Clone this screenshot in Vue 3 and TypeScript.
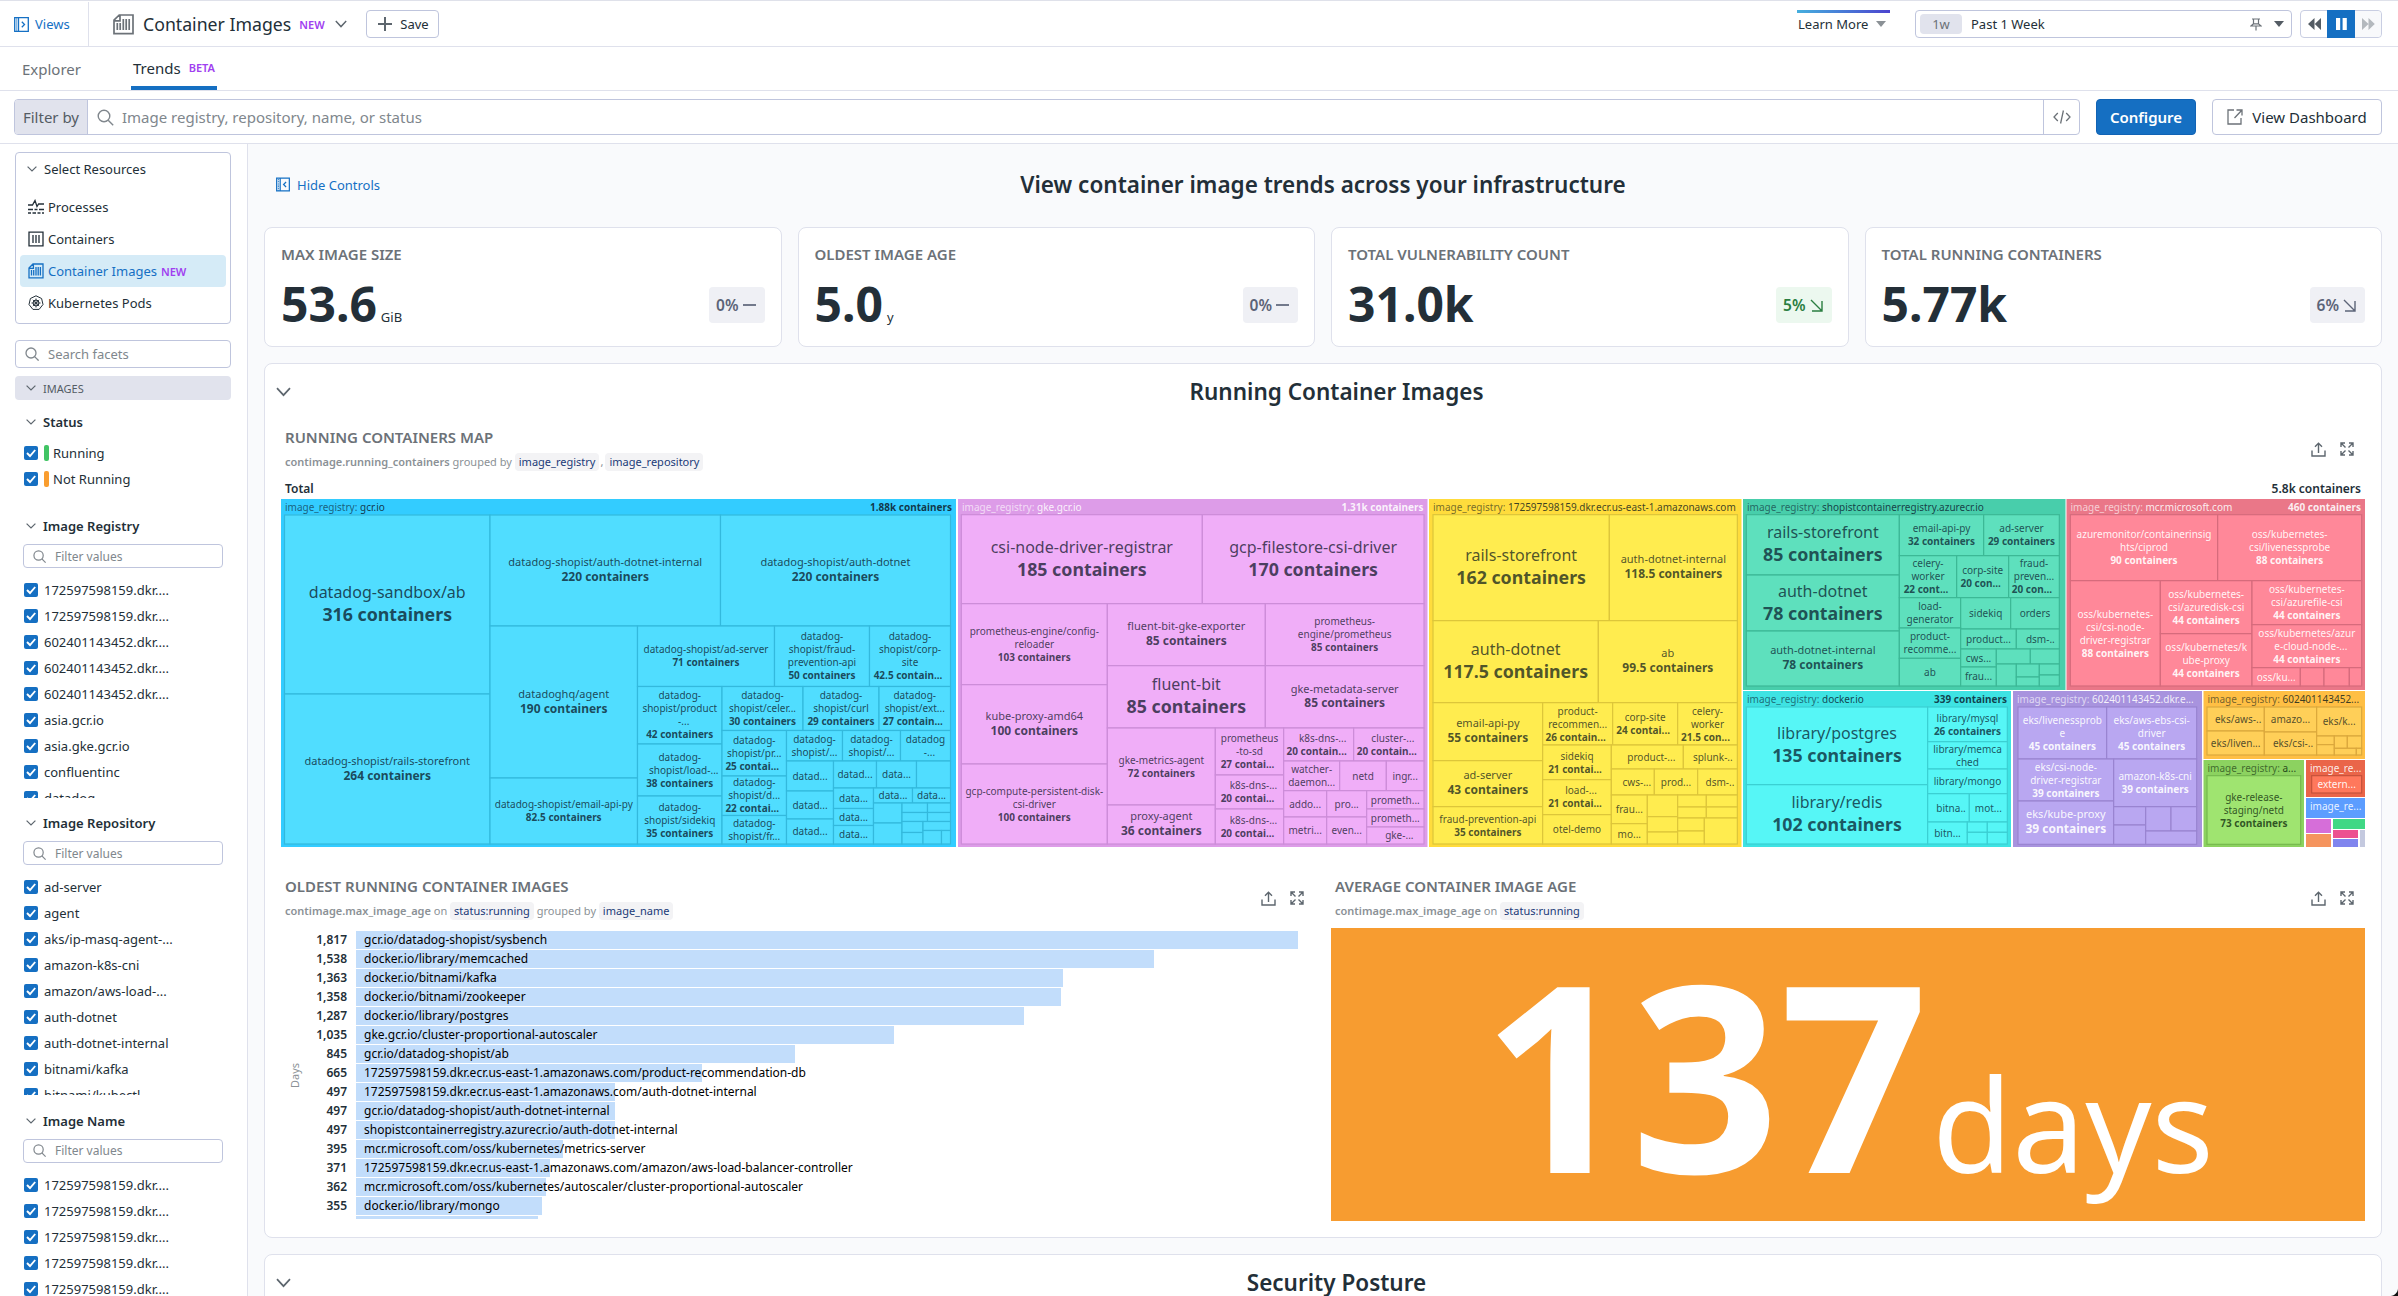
<script setup lang="ts">
interface Group {
  name: string
  total?: string
  box: number[]
  origin: [number, number]
  unit: number
  fill: string
  inner: string
  line: string
  ink: string
  headInk?: string
  tiles: Tile[]
}
// [left, top, right, bottom, size (s | m | l), name lines, count]
type Tile = [number, number, number, number, string?, string?, string?]
interface Line { text: string; x: number; y: number; size: number; bold: boolean }

const dark = '#0d2330'
const groups: Group[] = [
  {
    name: 'gcr.io', total: '1.88k containers', box: [281, 499, 956, 847], origin: [0, 0], unit: 1,
    fill: '#33ccff', inner: '#50ddff', line: '#33b9dd', ink: dark,
    tiles: [
      [284.5, 515, 490, 694, 'l', 'datadog-sandbox/ab', '316 containers'],
      [284.5, 694, 490, 844, 'm', 'datadog-shopist/rails-storefront', '264 containers'],
      [490, 515, 720.5, 626, 'm', 'datadog-shopist/auth-dotnet-internal', '220 containers'],
      [720.5, 515, 950.5, 626, 'm', 'datadog-shopist/auth-dotnet', '220 containers'],
      [490, 626, 637.5, 778, 'm', 'datadoghq/agent', '190 containers'],
      [490, 778, 637.5, 844, 's', 'datadog-shopist/email-api-py', '82.5 containers'],
      [637.5, 626, 774.5, 686.5, 's', 'datadog-shopist/ad-server', '71 containers'],
      [774.5, 626, 869.5, 686.5, 's', 'datadog-|shopist/fraud-|prevention-api', '50 containers'],
      [869.5, 626, 950.5, 686.5, 's', 'datadog-|shopist/corp-|site', '42.5 contain...'],
      [637.5, 686.5, 722, 744, 's', 'datadog-|shopist/product|-...', '42 containers'],
      [722, 686.5, 803, 730.5, 's', 'datadog-|shopist/celer...', '30 containers'],
      [803, 686.5, 879, 730.5, 's', 'datadog-|shopist/curl', '29 containers'],
      [879, 686.5, 950.5, 730.5, 's', 'datadog-|shopist/ext...', '27 contain...'],
      [637.5, 744, 722, 796, 's', 'datadog-|shopist/load-...', '38 containers'],
      [637.5, 796, 722, 844, 's', 'datadog-|shopist/sidekiq', '35 containers'],
      [722, 730.5, 786.5, 776, 's', 'datadog-|shopist/pr...', '25 contai...'],
      [786.5, 730.5, 842.5, 761, 's', 'datadog-|shopist/...'],
      [842.5, 730.5, 900.5, 761, 's', 'datadog-|shopist/...'],
      [900.5, 730.5, 950.5, 761, 's', 'datadog|-...'],
      [722, 776, 786.5, 815.5, 's', 'datadog-|shopist/d...', '22 contai...'],
      [722, 815.5, 786.5, 844, 's', 'datadog-|shopist/fr...'],
      [786.5, 761, 833.5, 791, 's', 'datad...'],
      [786.5, 791, 833.5, 819, 's', 'datad...'],
      [786.5, 819, 833.5, 844, 's', 'datad...'],
      [833.5, 761, 876.5, 788, 's', 'datad...'],
      [876.5, 761, 916.5, 788, 's', 'data...'],
      [916.5, 761, 950.5, 788],
      [833.5, 788, 873.5, 808.5, 's', 'data...'],
      [833.5, 808.5, 873.5, 825.5, 's', 'data...'],
      [833.5, 825.5, 873.5, 844, 's', 'data...'],
      [873.5, 788, 912.5, 803, 's', 'data...'],
      [912.5, 788, 950.5, 803, 's', 'data...'],
      [873.5, 803, 902, 823], [873.5, 823, 902, 844],
      [902, 803, 927.5, 812.5], [927.5, 803, 950.5, 812.5],
      [902, 812.5, 927.5, 821.5], [927.5, 812.5, 950.5, 821.5],
      [902, 821.5, 923, 832.5], [902, 832.5, 923, 844],
      [923, 821.5, 950.5, 830.5], [923, 830.5, 941.5, 844], [941.5, 830.5, 950.5, 844],
    ],
  },
  {
    name: 'gke.gcr.io', total: '1.31k containers', box: [958, 499, 1427.5, 847], origin: [940, 480], unit: 3,
    fill: '#dd9ce8', inner: '#f0aef8', line: '#cc8cd8', ink: '#1d2136', headInk: '#ffffff',
    tiles: [
      [64, 104, 787, 371, 'l', 'csi-node-driver-registrar', '185 containers'],
      [787, 104, 1452, 371, 'l', 'gcp-filestore-csi-driver', '170 containers'],
      [64, 371, 502, 614, 's', 'prometheus-engine/config-|reloader', '103 containers'],
      [64, 614, 502, 852, 'm', 'kube-proxy-amd64', '100 containers'],
      [64, 852, 502, 1092, 's', 'gcp-compute-persistent-disk-|csi-driver', '100 containers'],
      [502, 371, 976, 557, 'm', 'fluent-bit-gke-exporter', '85 containers'],
      [976, 371, 1452, 557, 's', 'prometheus-|engine/prometheus', '85 containers'],
      [502, 557, 976, 744, 'l', 'fluent-bit', '85 containers'],
      [976, 557, 1452, 744, 'm', 'gke-metadata-server', '85 containers'],
      [502, 744, 826, 975, 's', 'gke-metrics-agent', '72 containers'],
      [502, 975, 826, 1092, 'm', 'proxy-agent', '36 containers'],
      [826, 744, 1031, 885, 's', 'prometheus|-to-sd', '27 contai...'],
      [826, 885, 1031, 987, 's', 'k8s-dns-...', '20 contai...'],
      [826, 987, 1031, 1092, 's', 'k8s-dns-...', '20 contai...'],
      [1031, 744, 1241, 843, 's', 'k8s-dns-...', '20 contain...'],
      [1241, 744, 1452, 843, 's', 'cluster-...', '20 contain...'],
      [1031, 843, 1199, 932, 's', 'watcher-|daemon...'],
      [1199, 843, 1339, 932, 's', 'netd'],
      [1339, 843, 1452, 932, 's', 'ingr...'],
      [1031, 932, 1160, 1011, 's', 'addo...'],
      [1160, 932, 1280, 1011, 's', 'pro...'],
      [1031, 1011, 1160, 1092, 's', 'metri...'],
      [1160, 1011, 1280, 1092, 's', 'even...'],
      [1280, 932, 1452, 987, 's', 'prometh...'],
      [1280, 987, 1452, 1041, 's', 'prometh...'],
      [1280, 1041, 1452, 1092, 's', 'gke-...'],
    ],
  },
  {
    name: '172597598159.dkr.ecr.us-east-1.amazonaws.com', box: [1429, 499, 1741.5, 847], origin: [1410, 480], unit: 3,
    fill: '#ffdc3c', inner: '#ffec4f', line: '#dcc53a', ink: '#1f2c1f',
    tiles: [
      [69, 104, 598, 422, 'l', 'rails-storefront', '162 containers'],
      [598, 104, 982, 422, 'm', 'auth-dotnet-internal', '118.5 containers'],
      [69, 422, 565, 668, 'l', 'auth-dotnet', '117.5 containers'],
      [565, 422, 982, 668, 'm', 'ab', '99.5 containers'],
      [69, 668, 398, 842, 'm', 'email-api-py', '55 containers'],
      [69, 842, 398, 980, 'm', 'ad-server', '43 containers'],
      [69, 980, 398, 1092, 's', 'fraud-prevention-api', '35 containers'],
      [398, 668, 608, 795, 's', 'product-|recommen...', '26 contain...'],
      [608, 668, 803, 795, 's', 'corp-site', '24 contai...'],
      [803, 668, 982, 795, 's', 'celery-|worker', '21.5 con...'],
      [398, 795, 604, 899, 's', 'sidekiq', '21 contai...'],
      [398, 899, 604, 1004, 's', 'load-...', '21 contai...'],
      [398, 1004, 604, 1092, 's', 'otel-demo'],
      [604, 795, 820, 867, 's', 'product-...'],
      [820, 795, 982, 867, 's', 'splunk-..'],
      [604, 867, 733, 945, 's', 'cws-...'],
      [733, 867, 863, 945, 's', 'prod...'],
      [863, 867, 982, 945, 's', 'dsm-..'],
      [604, 945, 712, 1031, 's', 'frau...'],
      [604, 1031, 712, 1092, 's', 'mo...'],
      [712, 945, 803, 1010], [712, 1010, 803, 1056], [712, 1056, 803, 1092],
      [803, 945, 889, 981], [803, 981, 889, 1014], [889, 945, 982, 981], [889, 981, 982, 1014],
      [803, 1014, 883, 1053], [803, 1053, 883, 1092], [883, 1014, 982, 1092],
    ],
  },
  {
    name: 'shopistcontainerregistry.azurecr.io', box: [1743, 499, 2065.5, 690], origin: [1730, 480], unit: 3,
    fill: '#48ceab', inner: '#5ee0bd', line: '#3cb896', ink: '#0f2c38',
    tiles: [
      [49, 104, 508, 285, 'l', 'rails-storefront', '85 containers'],
      [49, 285, 508, 453, 'l', 'auth-dotnet', '78 containers'],
      [49, 453, 508, 618, 'm', 'auth-dotnet-internal', '78 containers'],
      [508, 104, 761, 227, 's', 'email-api-py', '32 containers'],
      [761, 104, 988, 227, 's', 'ad-server', '29 containers'],
      [508, 227, 680, 353, 's', 'celery-|worker', '22 cont...'],
      [680, 227, 836, 353, 's', 'corp-site', '20 con...'],
      [836, 227, 988, 353, 's', 'fraud-|preven...', '20 con...'],
      [508, 353, 692, 444, 's', 'load-|generator'],
      [692, 353, 842, 447, 's', 'sidekiq'],
      [842, 353, 988, 447, 's', 'orders'],
      [508, 444, 692, 535, 's', 'product-|recomme...'],
      [508, 535, 692, 618, 's', 'ab'],
      [692, 447, 859, 507, 's', 'product...'],
      [859, 447, 988, 507, 's', 'dsm-..'],
      [692, 507, 799, 561, 's', 'cws...'],
      [692, 561, 799, 618, 's', 'frau...'],
      [799, 507, 901, 552], [901, 507, 988, 552], [799, 552, 859, 618],
      [859, 552, 928, 591], [859, 591, 928, 618], [928, 552, 988, 585], [928, 585, 988, 618],
    ],
  },
  {
    name: 'docker.io', total: '339 containers', box: [1743, 691, 2011, 847], origin: [1730, 480], unit: 3,
    fill: '#3ee3e3', inner: '#56f6f6', line: '#3bcfd3', ink: '#0b2c3a',
    tiles: [
      [49, 681, 593, 914, 'l', 'library/postgres', '135 containers'],
      [49, 914, 593, 1092, 'l', 'library/redis', '102 containers'],
      [593, 681, 832, 785, 's', 'library/mysql', '26 containers'],
      [593, 785, 832, 867, 's', 'library/memca|ched'],
      [593, 867, 832, 941, 's', 'library/mongo'],
      [593, 941, 718, 1026, 's', 'bitna..'],
      [718, 941, 832, 1026, 's', 'mot...'],
      [593, 1026, 712, 1092, 's', 'bitn...'],
      [712, 1026, 772, 1057], [772, 1026, 832, 1057], [712, 1057, 772, 1092], [772, 1057, 832, 1092],
    ],
  },
  {
    name: 'mcr.microsoft.com', total: '460 containers', box: [2066.5, 499, 2365, 690], origin: [2040, 420], unit: 3,
    fill: '#ea7788', inner: '#ff8899', line: '#d56b7c', ink: '#ffffff',
    tiles: [
      [91, 284, 533, 482, 's', 'azuremonitor/containerinsig|hts/ciprod', '90 containers'],
      [533, 284, 965, 482, 's', 'oss/kubernetes-|csi/livenessprobe', '88 containers'],
      [91, 482, 361, 798, 's', 'oss/kubernetes-|csi/csi-node-|driver-registrar', '88 containers'],
      [361, 482, 636, 641, 's', 'oss/kubernetes-|csi/azuredisk-csi', '44 containers'],
      [361, 641, 636, 798, 's', 'oss/kubernetes/k|ube-proxy', '44 containers'],
      [636, 482, 965, 614, 's', 'oss/kubernetes-|csi/azurefile-csi', '44 containers'],
      [636, 614, 965, 743, 's', 'oss/kubernetes/azur|e-cloud-node-...', '44 containers'],
      [636, 743, 781, 798, 's', 'oss/ku...'],
      [781, 743, 852, 798], [852, 743, 928, 798], [928, 743, 965, 798],
    ],
  },
  {
    name: '602401143452.dkr.e...', box: [2013, 691, 2202, 847], origin: [2040, 420], unit: 3,
    fill: '#a893de', inner: '#b9a7f1', line: '#9984d0', ink: '#ffffff',
    tiles: [
      [-66, 861, 200, 1017, 's', 'eks/livenessprob|e', '45 containers'],
      [200, 861, 470, 1017, 's', 'eks/aws-ebs-csi-|driver', '45 containers'],
      [-66, 1017, 221, 1143, 's', 'eks/csi-node-|driver-registrar', '39 containers'],
      [-66, 1143, 221, 1273, 'm', 'eks/kube-proxy', '39 containers'],
      [221, 1017, 470, 1160, 's', 'amazon-k8s-cni', '39 containers'],
      [221, 1160, 317, 1215], [221, 1215, 317, 1273], [317, 1160, 393, 1233], [393, 1160, 470, 1233], [317, 1233, 470, 1273],
    ],
  },
  {
    name: '602401143452...', box: [2203.5, 691, 2365, 759], origin: [2040, 420], unit: 3,
    fill: '#ffbf44', inner: '#ffcf58', line: '#dba83c', ink: '#1f2c1f',
    tiles: [
      [501, 861, 673, 933, 's', 'eks/aws-..'],
      [501, 933, 673, 1005, 's', 'eks/liven...'],
      [673, 861, 830, 936, 's', 'amazo...'],
      [673, 936, 830, 1005, 's', 'eks/csi-..'],
      [830, 861, 965, 948, 's', 'eks/k...'],
      [830, 948, 883, 974], [830, 974, 883, 1005], [883, 948, 922, 985], [922, 948, 965, 985], [883, 985, 949, 1005], [949, 985, 965, 1005],
    ],
  },
  {
    name: 'a...', box: [2203.5, 760, 2304, 847], origin: [2040, 420], unit: 3,
    fill: '#8cd260', inner: '#9fe470', line: '#76b94e', ink: '#12300f',
    tiles: [[501, 1067, 782, 1273, 's', 'gke-release-|staging/netd', '73 containers']],
  },
  {
    name: '', box: [2306, 760, 2365, 797], origin: [2040, 420], unit: 3,
    fill: '#ea6549', inner: '#ff785c', line: '#c5523b', ink: '#ffffff',
    tiles: [[815, 1067, 965, 1119, 's', 'extern...']],
  },
  { name: '', box: [2306, 798, 2365, 818], origin: [0, 0], unit: 1, fill: '#5c9dff', inner: '', line: '', ink: '#ffffff', tiles: [] },
]

const specks: [number, number, number, number, string][] = [
  [2306, 819, 25, 14, '#d66ed9'],
  [2306, 834, 25, 13, '#f5945e'],
  [2333, 819, 32, 10, '#40d885'],
  [2333, 830, 25, 8, '#ec5190'],
  [2333, 839, 25, 8, '#8085ee'],
  [2360, 830, 5, 17, '#c4c9df'],
]

const place = (g: Group, v: number, axis: number) => g.origin[axis] + v / g.unit

function nudge(text: string, bold: boolean, size?: string): number {
  if (bold) return text.endsWith('...') ? -2 : 0
  if (size === 's' && text.endsWith('-...')) return 4
  if (text.endsWith('..') && !text.endsWith('...')) return 2.5
  return 0
}

function tileLines(g: Group, t: Tile): Line[] {
  const [x1, y1, x2, y2, size, label, count] = t
  if (!label) return []
  const cx = place(g, (x1 + x2) / 2, 0)
  const cy = place(g, (y1 + y2) / 2, 1)
  if (size === 'l') {
    return [
      { text: label, x: cx, y: cy - 6.4, size: 16, bold: false },
      { text: count ?? '', x: cx, y: cy + 16.6, size: 17.8, bold: true },
    ]
  }
  if (size === 'm') {
    return [
      { text: label, x: cx, y: cy - 4.3, size: 11, bold: false },
      { text: count ?? '', x: cx, y: cy + 10.6, size: 12, bold: true },
    ]
  }
  const texts = label.split('|').map((text) => ({ text, bold: false }))
  if (count) texts.push({ text: count, bold: true })
  return texts.map((l, i) => ({
    ...l,
    size: 10,
    x: cx + nudge(l.text, l.bold, size),
    y: cy + 3.7 + 13 * (i - (texts.length - 1) / 2),
  }))
}

const kpis = [
  { label: 'MAX IMAGE SIZE', value: '53.6', unit: 'GiB', delta: '0%', down: false, good: false },
  { label: 'OLDEST IMAGE AGE', value: '5.0', unit: 'y', delta: '0%', down: false, good: false },
  { label: 'TOTAL VULNERABILITY COUNT', value: '31.0k', unit: '', delta: '5%', down: true, good: true },
  { label: 'TOTAL RUNNING CONTAINERS', value: '5.77k', unit: '', delta: '6%', down: true, good: false },
]

const bars: [number, string][] = [
  [1817, 'gcr.io/datadog-shopist/sysbench'],
  [1538, 'docker.io/library/memcached'],
  [1363, 'docker.io/bitnami/kafka'],
  [1358, 'docker.io/bitnami/zookeeper'],
  [1287, 'docker.io/library/postgres'],
  [1035, 'gke.gcr.io/cluster-proportional-autoscaler'],
  [845, 'gcr.io/datadog-shopist/ab'],
  [665, '172597598159.dkr.ecr.us-east-1.amazonaws.com/product-recommendation-db'],
  [497, '172597598159.dkr.ecr.us-east-1.amazonaws.com/auth-dotnet-internal'],
  [497, 'gcr.io/datadog-shopist/auth-dotnet-internal'],
  [497, 'shopistcontainerregistry.azurecr.io/auth-dotnet-internal'],
  [395, 'mcr.microsoft.com/oss/kubernetes/metrics-server'],
  [371, '172597598159.dkr.ecr.us-east-1.amazonaws.com/amazon/aws-load-balancer-controller'],
  [362, 'mcr.microsoft.com/oss/kubernetes/autoscaler/cluster-proportional-autoscaler'],
  [355, 'docker.io/library/mongo'],
  [347, ''],
]
const barWidth = (days: number) => `${(2.4 + days * 0.5171).toFixed(1)}px`

const facets = [
  {
    title: 'Image Registry',
    values: ['172597598159.dkr....', '172597598159.dkr....', '602401143452.dkr....', '602401143452.dkr....', '602401143452.dkr....', 'asia.gcr.io', 'asia.gke.gcr.io', 'confluentinc', 'datadog'],
  },
  {
    title: 'Image Repository',
    values: ['ad-server', 'agent', 'aks/ip-masq-agent-...', 'amazon-k8s-cni', 'amazon/aws-load-...', 'auth-dotnet', 'auth-dotnet-internal', 'bitnami/kafka', 'bitnami/kubectl'],
  },
  {
    title: 'Image Name',
    values: ['172597598159.dkr....', '172597598159.dkr....', '172597598159.dkr....', '172597598159.dkr....', '172597598159.dkr....'],
  },
]
const statuses = [
  { name: 'Running', cls: 'ok' },
  { name: 'Not Running', cls: 'warn' },
]
</script>

<template>
  <div class="app">
    <header class="topbar">
      <a class="views">
        <svg width="15" height="15" viewBox="0 0 15 15" fill="none" stroke="currentColor" stroke-width="1.3"><path d="M.7.7h13.6v13.6H.7zM4.5.7v13.6" /><path d="M2.6 1.5v12.5" stroke-dasharray="1 1" /><path d="M7.8 4.8l2.7 2.7-2.7 2.7" /></svg>
        Views
      </a>
      <svg class="page-icon" width="21" height="21" viewBox="0 0 21 21" fill="none" stroke="#6c7278" stroke-width="1.7"><path d="M1 6.2L6.2 1H20v18.6H1zM7 1v5.8H1M10.3 5v11M13.2 5v11M16.2 5v11M7.2 9v7M4.3 9v7" /></svg>
      <span class="page-title">Container Images</span>
      <span class="tag title-tag">NEW</span>
      <svg class="title-chev" width="12" height="8" viewBox="0 0 12 8" fill="none" stroke="#5d666e" stroke-width="1.4"><path d="M.8 1L6 6.6 11.2 1" /></svg>
      <button class="save">
        <svg width="14" height="14" viewBox="0 0 14 14" fill="none" stroke="#5d666e" stroke-width="2"><path d="M7 0v14M0 7h14" /></svg>
        Save
      </button>
      <div class="grow"></div>
      <div class="learn"><span>Learn More</span><i class="caret"></i></div>
      <div class="range">
        <span class="range-pill">1w</span>
        <span class="range-text">Past 1 Week</span>
        <svg width="12" height="13" viewBox="0 0 12 13" fill="none" stroke="#6c7278" stroke-width="1.2"><path d="M2 1h8M3.5 1v5M8.5 1v5M3.5 5.8L1 8h10L8.5 5.8zM6 8v4.6" /></svg>
        <i class="caret dark"></i>
      </div>
      <div class="player">
        <span><svg width="13" height="12" viewBox="0 0 13 12" fill="#545c64"><path d="M6.5 0v12L0 6zM13 0v12L6.8 6z" /></svg></span>
        <span class="pause"><svg width="11" height="12" viewBox="0 0 11 12" fill="#fff"><path d="M0 0h4.2v12H0zM6.6 0h4.2v12H6.6z" /></svg></span>
        <span class="off"><svg width="13" height="12" viewBox="0 0 13 12" fill="#b4b9be"><path d="M0 0v12l6.5-6zM6.5 0v12L12.8 6z" /></svg></span>
      </div>
    </header>

    <nav class="tabs">
      <a class="tab">Explorer</a>
      <a class="tab active">Trends <span class="tag">BETA</span></a>
    </nav>

    <div class="filterbar">
      <div class="filter">
        <span class="filter-label">Filter by</span>
        <svg class="mag" width="17" height="17" viewBox="0 0 17 17" fill="none" stroke="#80878d" stroke-width="1.4"><circle cx="7" cy="7" r="5.8" /><path d="M11.2 11.2l5 5" /></svg>
        <span class="filter-hint">Image registry, repository, name, or status</span>
        <span class="code"><svg width="18" height="14" viewBox="0 0 18 14" fill="none" stroke="#6c7278" stroke-width="1.3"><path d="M4.8 3L1 7l3.8 4M13.2 3L17 7l-3.8 4M10.4.5l-2.8 13" /></svg></span>
      </div>
      <button class="configure">Configure</button>
      <button class="dash">
        <svg width="16" height="16" viewBox="0 0 16 16" fill="none" stroke="#6c7278" stroke-width="1.3"><path d="M7 1H1v14h13V9M9.5 1H15v5.5M15 1L7.5 9" /></svg>
        View Dashboard
      </button>
    </div>

    <div class="body">
      <aside class="side">
        <div class="resources">
          <div class="res-head"><svg class="chev" viewBox="0 0 10 6"><path d="M.6.6L5 5 9.4.6" /></svg>Select Resources</div>
          <div class="res">
            <svg width="16" height="16" viewBox="0 0 16 16" fill="none" stroke="#232f38" stroke-width="1.3"><path d="M0 6h4.5L7 1.5l2 6L10.6 5H16" /><path d="M0 10.5h5M6.5 10.5h3M11 10.5h5M0 14h3M4.5 14H8M9.5 14h3M14 14h2" stroke-width="1.7" /></svg>
            Processes
          </div>
          <div class="res">
            <svg width="16" height="16" viewBox="0 0 16 16" fill="none" stroke="#232f38" stroke-width="1.3"><path d="M1 1.2h14v13.6H1zM5 4v8M8 4v8M11 4v8" /></svg>
            Containers
          </div>
          <div class="res selected">
            <svg width="16" height="16" viewBox="0 0 16 16" fill="none" stroke="#1570c4" stroke-width="1.3"><path d="M1 5l4-4h10v13.8H1zM5.4 1v4.3H1M8 4v8.5M10.2 4v8.5M12.4 4v8.5M5.7 7v5.5M3.5 7v5.5" /></svg>
            Container Images <span class="tag">NEW</span>
          </div>
          <div class="res">
            <svg width="16" height="16" viewBox="0 0 16 16" fill="none" stroke="#232f38" stroke-width="1"><path d="M8 .8l5.6 2.7 1.4 6-3.9 4.9H4.9L1 9.5l1.4-6z" /><circle cx="8" cy="8" r="3" /><path d="M8 3.4v9.2M3.4 8h9.2M4.8 4.8l6.4 6.4M11.2 4.8l-6.4 6.4" stroke-width=".8" /></svg>
            Kubernetes Pods
          </div>
        </div>
        <div class="search">
          <svg width="14" height="14" viewBox="0 0 14 14" fill="none" stroke="#80878d" stroke-width="1.3"><circle cx="6" cy="6" r="5" /><path d="M9.6 9.6l4 4" /></svg>
          Search facets
        </div>
        <div class="images-bar"><svg class="chev" viewBox="0 0 10 6"><path d="M.6.6L5 5 9.4.6" /></svg>IMAGES</div>
        <section class="status">
          <h4><svg class="chev" viewBox="0 0 10 6"><path d="M.6.6L5 5 9.4.6" /></svg>Status</h4>
          <div v-for="s in statuses" :key="s.name" class="opt">
            <span class="box"><svg viewBox="0 0 14 14"><path d="M3 7l3 3 5.2-6" /></svg></span>
            <i class="bar" :class="s.cls"></i>{{ s.name }}
          </div>
        </section>
        <section v-for="f in facets" :key="f.title" class="facet">
          <h4><svg class="chev" viewBox="0 0 10 6"><path d="M.6.6L5 5 9.4.6" /></svg>{{ f.title }}</h4>
          <div class="values-filter">
            <svg width="13" height="13" viewBox="0 0 14 14" fill="none" stroke="#80878d" stroke-width="1.3"><circle cx="6" cy="6" r="5" /><path d="M9.6 9.6l4 4" /></svg>
            Filter values
          </div>
          <div class="list">
            <div v-for="(v, i) in f.values" :key="i" class="opt">
              <span class="box"><svg viewBox="0 0 14 14"><path d="M3 7l3 3 5.2-6" /></svg></span>{{ v }}
            </div>
          </div>
        </section>
      </aside>

      <main class="main">
        <div class="intro">
          <a class="hide">
            <svg width="14" height="15" viewBox="0 0 15 15" fill="none" stroke="currentColor" stroke-width="1.3"><path d="M.7.7h13.6v13.6H.7zM4.5.7v13.6" /><path d="M2.6 1.5v12.5" stroke-dasharray="1 1" /><path d="M10.8 4.8L8.1 7.5l2.7 2.7" /></svg>
            Hide Controls
          </a>
          <h2>View container image trends across your infrastructure</h2>
          <span></span>
        </div>

        <div class="kpis">
          <div v-for="k in kpis" :key="k.label" class="kpi card">
            <div class="kpi-label">{{ k.label }}</div>
            <div class="kpi-row">
              <div class="kpi-num"><b>{{ k.value }}</b><span>{{ k.unit }}</span></div>
              <div class="delta" :class="{ good: k.good }">
                {{ k.delta }}
                <svg v-if="k.down" width="13" height="13" viewBox="0 0 13 13" fill="none" stroke="currentColor" stroke-width="1.4"><path d="M1 1l11 11M12 2v10H2" /></svg>
                <svg v-else width="13" height="13" viewBox="0 0 13 13" fill="none" stroke="currentColor" stroke-width="1.7"><path d="M0 6h13" /></svg>
              </div>
            </div>
          </div>
        </div>

        <section class="card board">
          <div class="board-head">
            <svg width="15" height="10" viewBox="0 0 15 10" fill="none" stroke="#5d666e" stroke-width="1.7"><path d="M1 1.2l6.5 7L14 1.2" /></svg>
            <h2>Running Container Images</h2>
          </div>
          <div class="whead">
            <div>
              <h3>RUNNING CONTAINERS MAP</h3>
              <p><b>contimage.running_containers</b> grouped by <em>image_registry</em><span class="comma">,</span><em>image_repository</em></p>
            </div>
            <div class="tools">
              <svg width="15" height="15" viewBox="0 0 15 15"><path d="M1 8.5V14h13V8.5M7.5 11V1.5M4 4.7l3.5-3.5L11 4.7" /></svg>
              <svg width="14" height="14" viewBox="0 0 14 14"><path d="M1 5V1h4M9 1h4v4M13 9v4H9M5 13H1V9M1 1l4.5 4.5M13 1L8.5 5.5M13 13L8.5 8.5M1 13l4.5-4.5" /></svg>
            </div>
          </div>
          <div class="total"><span>Total</span><span>5.8k containers</span></div>
          <svg class="treemap" viewBox="281 499 2084 348">
            <g v-for="(g, gi) in groups" :key="gi" :fill="g.ink">
              <rect :x="g.box[0]" :y="g.box[1]" :width="g.box[2] - g.box[0]" :height="g.box[3] - g.box[1]" :fill="g.fill" />
              <text v-if="g.name" class="head" :fill="g.headInk ?? g.ink" :x="g.box[0] + 4" :y="g.box[1] + 11.8"><tspan fill-opacity=".65">image_registry: </tspan><tspan>{{ g.name }}</tspan></text>
              <text v-else class="head" :x="g.box[0] + 4" :y="g.box[1] + 11.8">image_re...</text>
              <text v-if="g.total" class="head strong" :fill="g.headInk ?? g.ink" :x="g.box[2] - 4" :y="g.box[1] + 11.8" text-anchor="end">{{ g.total }}</text>
              <rect
                v-for="(t, ti) in g.tiles"
                :key="'r' + ti"
                :x="place(g, t[0], 0)"
                :y="place(g, t[1], 1)"
                :width="(t[2] - t[0]) / g.unit"
                :height="(t[3] - t[1]) / g.unit"
                :fill="g.inner"
                :stroke="g.line"
                stroke-width="1.2"
              />
              <template v-for="(t, ti) in g.tiles" :key="'t' + ti">
                <text
                  v-for="(l, li) in tileLines(g, t)"
                  :key="li"
                  :x="l.x"
                  :y="l.y"
                  :font-size="l.size"
                  :font-weight="l.bold ? 700 : 400"
                  text-anchor="middle"
                  fill-opacity=".8"
                  :class="{ light: g.ink === '#ffffff' }"
                >{{ l.text }}</text>
              </template>
            </g>
            <rect v-for="(s, i) in specks" :key="'s' + i" :x="s[0]" :y="s[1]" :width="s[2]" :height="s[3]" :fill="s[4]" />
          </svg>

          <div class="pair">
            <div class="widget">
              <div class="whead">
                <div>
                  <h3>OLDEST RUNNING CONTAINER IMAGES</h3>
                  <p><b>contimage.max_image_age</b> on <em>status:running</em> grouped by <em>image_name</em></p>
                </div>
                <div class="tools">
                  <svg width="15" height="15" viewBox="0 0 15 15"><path d="M1 8.5V14h13V8.5M7.5 11V1.5M4 4.7l3.5-3.5L11 4.7" /></svg>
                  <svg width="14" height="14" viewBox="0 0 14 14"><path d="M1 5V1h4M9 1h4v4M13 9v4H9M5 13H1V9M1 1l4.5 4.5M13 1L8.5 5.5M13 13L8.5 8.5M1 13l4.5-4.5" /></svg>
                </div>
              </div>
              <div class="toplist">
                <div class="axis"><span>Days</span></div>
                <div class="rows">
                  <div v-for="(b, i) in bars" :key="i" class="row">
                    <span class="val">{{ b[1] ? b[0].toLocaleString('en-US') : '' }}</span>
                    <span class="fill" :style="{ width: barWidth(b[0]) }">{{ b[1] }}</span>
                  </div>
                </div>
              </div>
            </div>
            <div class="widget">
              <div class="whead">
                <div>
                  <h3>AVERAGE CONTAINER IMAGE AGE</h3>
                  <p><b>contimage.max_image_age</b> on <em>status:running</em></p>
                </div>
                <div class="tools">
                  <svg width="15" height="15" viewBox="0 0 15 15"><path d="M1 8.5V14h13V8.5M7.5 11V1.5M4 4.7l3.5-3.5L11 4.7" /></svg>
                  <svg width="14" height="14" viewBox="0 0 14 14"><path d="M1 5V1h4M9 1h4v4M13 9v4H9M5 13H1V9M1 1l4.5 4.5M13 1L8.5 5.5M13 13L8.5 8.5M1 13l4.5-4.5" /></svg>
                </div>
              </div>
              <div class="big"><b>137</b><span>days</span></div>
            </div>
          </div>
        </section>

        <section class="card board next">
          <div class="board-head">
            <svg width="15" height="10" viewBox="0 0 15 10" fill="none" stroke="#5d666e" stroke-width="1.7"><path d="M1 1.2l6.5 7L14 1.2" /></svg>
            <h2>Security Posture</h2>
          </div>
        </section>
      </main>
    </div>
    <i class="corner"></i>
  </div>
</template>

<style>
html, body { margin: 0; overflow: hidden; background: #fff; }
</style>

<style scoped>
* { box-sizing: border-box; }
.app { position: relative; width: 2398px; height: 1296px; overflow: hidden; font-family: "Noto Sans", sans-serif; font-size: 13px; color: #232f38; background: #fff; }
h2, h3, h4, p { margin: 0; }
svg { flex: none; display: block; }
button { font: inherit; color: inherit; background: #fff; border: 1px solid #bfc5dd; border-radius: 4px; padding: 0; display: flex; align-items: center; white-space: nowrap; }
.grow { flex: 1; }
.tag { color: #a040f0; font-size: 11px; font-weight: 600; }

.topbar { height: 47px; border-top: 1px solid #dfe1ea; border-bottom: 1px solid #dfe1ec; display: flex; align-items: center; padding: 1px 16px 0 14px; }
.views { display: flex; align-items: center; gap: 6px; width: 75px; height: 100%; border-right: 1px solid #dfe1ec; color: #1570c4; }
.page-icon { margin-left: 24px; }
.page-title { font-size: 17.7px; margin-left: 9px; }
.title-tag { margin-left: 8px; width: 27px; }
.title-chev { margin-left: 9px; }
.save { margin-left: 19px; height: 28px; width: 73px; padding-left: 11px; gap: 8px; }
.learn { align-self: flex-start; margin-top: 8px; width: 93px; height: 25px; border-top: 3px solid; border-image: linear-gradient(90deg, #45b0de, #4c43cf) 1; display: flex; align-items: center; gap: 8px; padding-left: 1px; }
.caret { border: 5px solid transparent; border-top: 6px solid #8b9196; border-bottom: 0; }
.caret.dark { border-top-color: #545c64; }
.range { margin-left: 25px; width: 377px; height: 28px; border: 1px solid #bfc5dd; border-radius: 4px; display: flex; align-items: center; padding: 0 7px 0 4px; }
.range-pill { width: 42px; height: 20px; border-radius: 4px; background: #e1e3ed; color: #6c7278; display: flex; align-items: center; justify-content: center; }
.range-text { flex: 1; margin-left: 9px; }
.range .caret { margin-left: 12px; }
.player { margin-left: 8px; width: 82px; height: 28px; border: 1px solid #c9cee2; border-radius: 4px; display: flex; }
.player span { flex: 1; display: flex; align-items: center; justify-content: center; }
.player .pause { background: #156fc2; margin: -1px 0; flex: 0 0 28px; }
.player .off { background: #f8f9fb; border-radius: 0 4px 4px 0; }

.tabs { height: 44px; border-bottom: 1px solid #dfe1ec; display: flex; padding-left: 22px; font-size: 15px; }
.tab { display: flex; align-items: center; color: #6c7278; margin-right: 50px; height: 43px; }
.tab.active { color: #232f38; border-bottom: 4px solid #156fc2; padding: 2px 2px 0 2px; gap: 8px; }

.filterbar { height: 53px; border-bottom: 1px solid #dfe1ec; padding: 8px 16px 8px 14px; display: flex; gap: 16px; font-size: 15px; }
.filter { flex: 1; height: 36px; border: 1px solid #bfc5dd; border-radius: 4px; display: flex; align-items: center; overflow: hidden; }
.filter-label { width: 73px; height: 100%; background: #e1e3ed; border-right: 1px solid #bfc5dd; display: flex; align-items: center; justify-content: center; color: #545c64; }
.mag { margin-left: 9px; }
.filter-hint { flex: 1; margin-left: 8px; color: #80878d; }
.code { width: 36px; height: 100%; border-left: 1px solid #bfc5dd; display: flex; align-items: center; justify-content: center; }
.configure { width: 100px; height: 36px; justify-content: center; background: #156fc2; border-color: #1163b5; color: #fff; font-weight: 600; }
.dash { width: 170px; height: 36px; justify-content: center; gap: 9px; }

.body { display: flex; height: 1152px; }
.side { width: 248px; flex: none; border-right: 1px solid #dfe1ec; padding: 8px 16px 0 15px; overflow: hidden; }
.resources { height: 172px; border: 1px solid #bfc5dd; border-radius: 4px; padding: 0 4px; }
.chev { width: 10px; height: 6px; fill: none; stroke: #5d666e; stroke-width: 1.2; }
.res-head { height: 32px; margin-bottom: 6px; padding-left: 7px; display: flex; align-items: center; gap: 7px; }
.res { height: 32px; padding-left: 8px; display: flex; align-items: center; gap: 4px; border-radius: 4px; white-space: nowrap; }
.res.selected { background: #d5ebf7; color: #1570c4; }
.search { margin-top: 16px; height: 28px; border: 1px solid #bfc5dd; border-radius: 4px; display: flex; align-items: center; gap: 9px; padding-left: 9px; color: #80878d; }
.images-bar { margin-top: 8px; height: 24px; border-radius: 4px; background: #e1e3ed; display: flex; align-items: center; gap: 7px; padding-left: 11px; font-size: 11px; color: #545c64; }
h4 { height: 18px; display: flex; align-items: center; gap: 7px; padding-left: 11px; font-size: 13px; font-weight: 600; }
.status { height: 117px; padding-top: 13px; }
.status h4 { margin-bottom: 9px; }
.opt { height: 26px; display: flex; align-items: center; padding-left: 9px; white-space: nowrap; }
.box { width: 14px; height: 14px; margin-right: 6px; border-radius: 2px; background: #156fc2; flex: none; }
.box svg { width: 14px; height: 14px; fill: none; stroke: #fff; stroke-width: 1.9; }
.bar { width: 5px; height: 16px; border-radius: 2px; margin-right: 4px; }
.bar.ok { background: #41c464; }
.bar.warn { background: #f99d2f; }
.facet { height: 297.3px; }
.values-filter { margin: 9px 8px 9px; height: 24px; border: 1px solid #bfc5dd; border-radius: 4px; display: flex; align-items: center; gap: 9px; padding-left: 9px; font-size: 12px; color: #80878d; }
.list { height: 221px; overflow: hidden; }

.main { flex: 1; background: #f9fafc; padding: 0 16px; overflow: hidden; }
.intro { height: 83px; padding-bottom: 2px; display: grid; grid-template-columns: 1fr auto 1fr; align-items: center; }
.hide { display: flex; align-items: center; gap: 7px; padding-left: 12px; color: #1570c4; }
h2 { font-size: 22.5px; line-height: 30px; font-weight: 600; }
.card { background: #fff; border: 1px solid #dfe1ec; border-radius: 8px; }
.kpis { display: grid; grid-template-columns: repeat(4, 1fr); gap: 16px; }
.kpi { height: 120px; padding: 16px 16px 0 16px; }
.kpi-label { height: 20px; line-height: 20px; font-size: 15px; font-weight: 600; color: #6c7278; }
.kpi-row { margin-top: 18px; height: 46px; display: flex; justify-content: space-between; align-items: center; }
.kpi-num { display: flex; align-items: baseline; gap: 4px; height: 48px; line-height: 46px; }
.kpi-num b { font-size: 48px; }
.kpi-num span { line-height: 16px; }
.delta { height: 36px; padding: 0 9px 0 7px; border-radius: 4px; background: #eff0f5; color: #5c6478; font-size: 15.5px; font-weight: 600; display: flex; align-items: center; gap: 4px; }
.delta.good { background: #ecf8ef; color: #2a7e41; }
.board { margin-top: 16px; height: 875px; padding: 0 16px; }
.board-head { height: 57px; padding-bottom: 2px; margin: 0 -5px; display: flex; align-items: center; gap: 12px; }
.board-head h2 { flex: 1; text-align: center; }
.whead { height: 50px; padding: 6px 11px 0 4px; display: flex; justify-content: space-between; }
h3 { height: 20px; line-height: 20px; font-size: 15px; font-weight: 600; color: #6c7278; }
p { margin-top: 6px; height: 18px; line-height: 18px; font-size: 11px; color: #8b9196; white-space: nowrap; }
p b { font-weight: 600; }
em { display: inline-block; font-style: normal; color: #1a3a78; background: #f3f3f5; border-radius: 4px; padding: 0 4px; }
.comma { display: inline-block; width: 6px; padding-left: 1px; }
.tools { display: flex; align-items: center; gap: 14px; }
.tools svg { fill: none; stroke: #5d666e; stroke-width: 1.4; }
.total { margin-top: 8px; height: 20px; padding: 0 4px 1px; display: flex; justify-content: space-between; align-items: center; font-size: 12px; font-weight: 600; }
.treemap { width: 2084px; height: 348px; }
.treemap text { font-family: "Noto Sans", sans-serif; }
.treemap .head { font-size: 10px; fill-opacity: .88; white-space: pre; }
.treemap .strong { font-weight: 700; }
.treemap .light { fill-opacity: .92; }
.pair { display: flex; gap: 16px; margin-top: 23px; }
.widget { width: 1034px; }
.toplist { display: flex; height: 288px; margin-top: 11px; overflow: hidden; }
.axis { width: 28px; display: flex; align-items: center; justify-content: center; color: #8b9196; font-size: 11px; }
.axis span { transform: rotate(-90deg); }
.row { display: flex; height: 18px; margin-bottom: 1.03px; }
.val { width: 38px; text-align: right; margin-right: 9px; font-size: 12px; font-weight: 600; line-height: 18px; }
.fill { display: block; height: 18px; line-height: 17px; padding-left: 8px; background: #c2ddfb; color: #000; font-size: 12px; white-space: nowrap; }
.big { margin-top: 8px; height: 293px; background: #f79c30; color: #fff; display: flex; justify-content: center; align-items: baseline; gap: 4px; line-height: 289px; overflow: hidden; }
.big b { font-size: 260px; }
.big span { font-size: 130px; }
.corner { position: absolute; right: 0; bottom: 0; width: 8px; height: 8px; background: radial-gradient(circle at 0 0, transparent 7.5px, #111 8.5px); }
</style>
